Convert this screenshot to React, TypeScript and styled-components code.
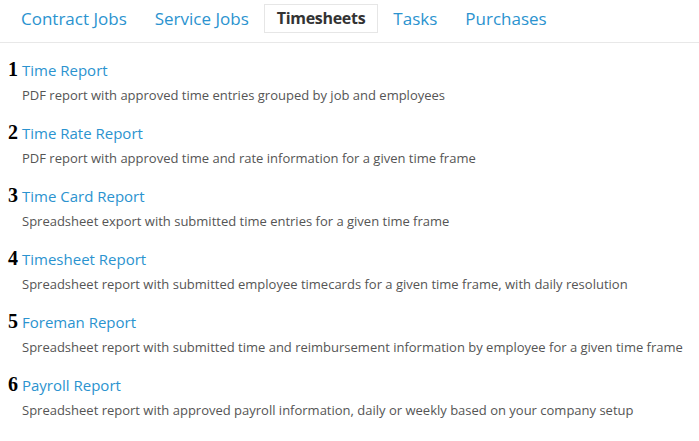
import React from "react";
import styled, { createGlobalStyle } from "styled-components";

const GlobalStyle = createGlobalStyle`
  html, body {
    margin: 0;
    padding: 0;
    background: #fff;
    font-family: "Open Sans", "Lato", sans-serif;
  }
`;

const tabs = ["Contract Jobs", "Service Jobs", "Timesheets", "Tasks", "Purchases"];

const reports = [
  { title: "Time Report", desc: "PDF report with approved time entries grouped by job and employees" },
  { title: "Time Rate Report", desc: "PDF report with approved time and rate information for a given time frame" },
  { title: "Time Card Report", desc: "Spreadsheet export with submitted time entries for a given time frame" },
  { title: "Timesheet Report", desc: "Spreadsheet report with submitted employee timecards for a given time frame, with daily resolution" },
  { title: "Foreman Report", desc: "Spreadsheet report with submitted time and reimbursement information by employee for a given time frame" },
  { title: "Payroll Report", desc: "Spreadsheet report with approved payroll information, daily or weekly based on your company setup" },
];

export default function App() {
  return (
    <Page>
      <GlobalStyle />
      <Nav>
        {tabs.map((t) => (
          <Tab key={t} active={t === "Timesheets"}>
            {t}
          </Tab>
        ))}
      </Nav>
      <List>
        {reports.map((r, i) => (
          <Item key={r.title}>
            <Head>
              <Num>{i + 1}</Num>
              <Title>{r.title}</Title>
            </Head>
            <Desc>{r.desc}</Desc>
          </Item>
        ))}
      </List>
    </Page>
  );
}

const Page = styled.div`
  width: 699px;
  height: 441px;
`;

const Nav = styled.div`
  display: flex;
  align-items: center;
  gap: 2px;
  padding: 4px 0 9px 8px;
  border-bottom: 1px solid #e8e8e8;
`;

const Tab = styled.div<{ active?: boolean }>`
  padding: 0 12px;
  height: 29px;
  box-sizing: border-box;
  line-height: 27px;
  font-size: ${(p) => (p.active ? "16px" : "17px")};
  letter-spacing: ${(p) => (p.active ? "-0.3px" : "0")};
  color: ${(p) => (p.active ? "#333" : "#2b93cf")};
  font-weight: ${(p) => (p.active ? 700 : 400)};
  border: 1px solid ${(p) => (p.active ? "#e6e6e6" : "transparent")};
`;

const List = styled.div`
  display: flex;
  flex-direction: column;
  padding: 15px 0 0 8px;
`;

const Item = styled.div`
  display: flex;
  flex-direction: column;
  height: 63px;
`;

const Head = styled.div`
  display: flex;
  align-items: baseline;
  gap: 4px;
  height: 26px;
`;

const Num = styled.span`
  font-family: "Liberation Serif", serif;
  font-weight: 700;
  font-size: 20px;
  color: #000;
  width: 10px;
`;

const Title = styled.span`
  font-size: 15px;
  color: #2b93cf;
`;

const Desc = styled.div`
  margin-top: 2px;
  padding-left: 14px;
  font-size: 13px;
  color: #555;
`;
